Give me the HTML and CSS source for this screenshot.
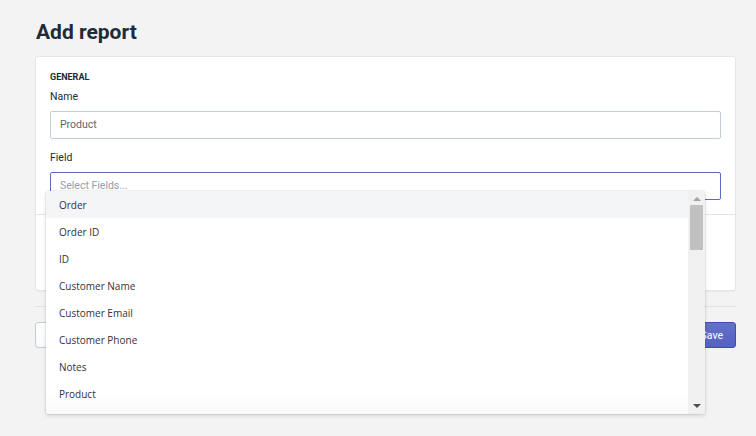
FILE: index.html
```html
<!DOCTYPE html>
<html>
<head>
<meta charset="utf-8">
<link rel="stylesheet" href="styles.css">
</head>
<body>
<div class="page">
  <h1 class="title">Add report</h1>
  <div class="card">
    <div class="section">
      <div class="subhead">General</div>
      <label class="label">Name</label>
      <div class="input">Product</div>
      <label class="label label-field">Field</label>
      <div class="input input-focus placeholder">Select Fields...</div>
    </div>
    <div class="section section-empty"></div>
  </div>
  <div class="divider"></div>
  <div class="actions">
    <button class="btn">Cancel</button>
    <button class="btn btn-primary">Save</button>
  </div>

  <div class="dropdown">
    <ul class="options">
      <li class="option active">Order</li>
      <li class="option">Order ID</li>
      <li class="option">ID</li>
      <li class="option">Customer Name</li>
      <li class="option">Customer Email</li>
      <li class="option">Customer Phone</li>
      <li class="option">Notes</li>
      <li class="option">Product</li>
    </ul>
    <div class="scrollbar">
      <span class="arrow arrow-up"></span>
      <div class="track"><div class="thumb"></div></div>
      <span class="arrow arrow-down"></span>
    </div>
  </div>
</div>
</body>
</html>
```

FILE: styles.css
```css
html, body {
  margin: 0;
  padding: 0;
  background: #f3f3f3;
}
body {
  font-family: Roboto, "Liberation Sans", sans-serif;
  color: #212b36;
}
.page {
  position: relative;
  padding: 18px 20px 0 35px;
  height: 418px;
}
.title {
  margin: 0 0 10px 1px;
  font-size: 21px;
  line-height: 28px;
  font-weight: 700;
  color: #212b36;
}
.card {
  background: #fff;
  border: 1px solid #e4e5e7;
  border-radius: 3px;
  box-shadow: 0 1px 1px rgba(0,0,0,0.04);
}
.section {
  display: flex;
  flex-direction: column;
  padding: 14px 14px 14px 14px;
}
.section-empty {
  border-top: 1px solid #e1e3e5;
  height: 75px;
  padding: 0;
}
.subhead {
  font-size: 9px;
  line-height: 12px;
  font-weight: 700;
  text-transform: uppercase;
  color: #212b36;
  margin-bottom: 6px;
}
.label {
  font-size: 10.5px;
  line-height: 16px;
  color: #212b36;
  margin-bottom: 6px;
}
.label-field {
  margin-top: 11px;
  margin-bottom: 6px;
}
.input {
  box-sizing: border-box;
  height: 28px;
  border: 1px solid #c4cdd5;
  border-radius: 2px;
  padding: 0 9px;
  font-size: 10.5px;
  line-height: 26px;
  color: #5c6670;
  background: #fff;
}
.input-focus {
  border-color: #5c6ac4;
}
.placeholder {
  color: #919eab;
}
.divider {
  margin-top: 15px;
  height: 1px;
  background: #dfe3e8;
}
.actions {
  display: flex;
  justify-content: space-between;
  margin-top: 15px;
}
.btn {
  box-sizing: border-box;
  height: 26px;
  padding: 0 14px;
  border: 1px solid #c4cdd5;
  border-radius: 3px;
  background: linear-gradient(#fff, #f9fafb);
  font-family: Roboto, "Liberation Sans", sans-serif;
  font-size: 10.5px;
  color: #212b36;
}
.btn-primary {
  background: linear-gradient(#6371c7, #5563c1);
  border-color: #3f4eae;
  color: #fff;
  padding: 0 12px;
}
.dropdown {
  position: absolute;
  left: 46px;
  top: 191px;
  width: 659px;
  height: 223px;
  display: flex;
  background: #fff;
  border-radius: 3px;
  box-shadow: 0 0 0 1px rgba(0,0,0,0.05), 0 2px 4px rgba(0,0,0,0.12);
  overflow: hidden;
}
.options {
  flex: 1;
  list-style: none;
  margin: 0;
  padding: 0;
  overflow: hidden;
  background: linear-gradient(to bottom, #fff 90%, #f9f9f9 100%);
}
.option {
  height: 27px;
  line-height: 28px;
  padding-left: 13px;
  font-family: "Open Sans", "Noto Sans", sans-serif;
  font-size: 10px;
  color: #333;
}
.option.active {
  background: #f4f5f7;
}
.scrollbar {
  width: 17px;
  background: #f1f1f1;
  display: flex;
  flex-direction: column;
  align-items: center;
}
.arrow {
  width: 0;
  height: 0;
  border-left: 4px solid transparent;
  border-right: 4px solid transparent;
}
.arrow-up {
  margin-top: 6px;
  border-bottom: 4px solid #a3a3a3;
}
.arrow-down {
  margin-bottom: 6px;
  border-top: 4px solid #505050;
}
.track {
  flex: 1;
  width: 100%;
  padding: 4px 2px 0;
  box-sizing: border-box;
}
.thumb {
  height: 45px;
  background: #c1c1c1;
}
```
